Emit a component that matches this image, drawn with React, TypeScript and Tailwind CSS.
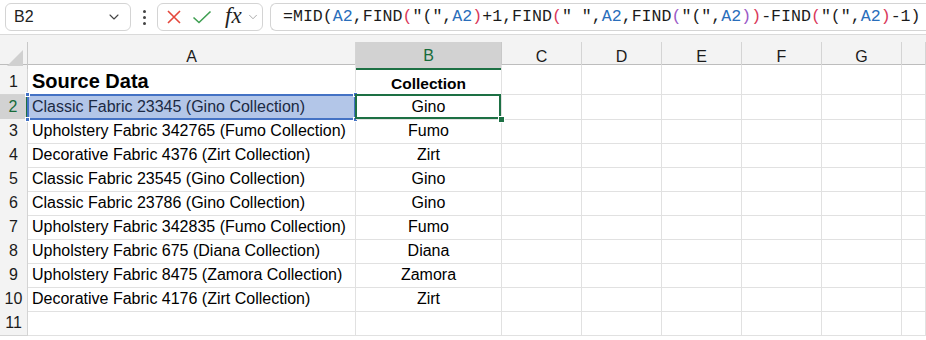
import { ChevronDown } from "lucide-react";

const COLS = ["A", "B", "C", "D", "E", "F", "G", ""];
const GRID = "grid grid-cols-[28px_328px_146px_80px_80px_80px_80px_80px_1fr]";
const CELL_FONT = { fontFamily: '"Liberation Sans Narrow", "Liberation Sans", Arial, sans-serif' };

const rows: [string, string][] = [
  ["Classic Fabric 23345 (Gino Collection)", "Gino"],
  ["Upholstery Fabric 342765 (Fumo Collection)", "Fumo"],
  ["Decorative Fabric 4376 (Zirt Collection)", "Zirt"],
  ["Classic Fabric 23545 (Gino Collection)", "Gino"],
  ["Classic Fabric 23786 (Gino Collection)", "Gino"],
  ["Upholstery Fabric 342835 (Fumo Collection)", "Fumo"],
  ["Upholstery Fabric 675 (Diana Collection)", "Diana"],
  ["Upholstery Fabric 8475 (Zamora Collection)", "Zamora"],
  ["Decorative Fabric 4176 (Zirt Collection)", "Zirt"],
];

// formula pieces coloured like Excel does it: refs blue, parens by depth
const formula: [string, string][] = [
  ["=MID(", "text-[#1b1b1b]"],
  ["A2", "text-[#2a6ebb]"],
  [",FIND", "text-[#1b1b1b]"],
  ["(", "text-[#d9375a]"],
  ['"(",', "text-[#1b1b1b]"],
  ["A2", "text-[#2a6ebb]"],
  [")", "text-[#d9375a]"],
  ["+1,FIND", "text-[#1b1b1b]"],
  ["(", "text-[#d9375a]"],
  ['" ",', "text-[#1b1b1b]"],
  ["A2", "text-[#2a6ebb]"],
  [",FIND", "text-[#1b1b1b]"],
  ["(", "text-[#9b59c6]"],
  ['"(",', "text-[#1b1b1b]"],
  ["A2", "text-[#2a6ebb]"],
  [")", "text-[#9b59c6]"],
  [")", "text-[#d9375a]"],
  ["-FIND", "text-[#1b1b1b]"],
  ["(", "text-[#d9375a]"],
  ['"(",', "text-[#1b1b1b]"],
  ["A2", "text-[#2a6ebb]"],
  [")", "text-[#d9375a]"],
  ["-1)", "text-[#1b1b1b]"],
];

function Handle({ className }: { className: string }) {
  return <span className={`absolute w-[5px] h-[5px] bg-[#4472c4] border border-white ${className}`} />;
}

function FormulaBar() {
  return (
    <div className="flex items-center h-[34px] bg-white pl-[5px] gap-[7px]">
      <div className="flex items-center justify-between w-[126px] h-[28px] border border-[#d4d4d4] rounded-[6px] pl-[8px] pr-[8px]">
        <span className="text-[16px] text-[#222]" style={{ fontFamily: '"Liberation Sans", Arial, sans-serif' }}>
          B2
        </span>
        <ChevronDown size={16} strokeWidth={1.6} className="text-[#444]" />
      </div>
      <div className="flex flex-col gap-[3px] w-[12px] items-center">
        <span className="w-[3px] h-[3px] rounded-full bg-[#444]" />
        <span className="w-[3px] h-[3px] rounded-full bg-[#444]" />
        <span className="w-[3px] h-[3px] rounded-full bg-[#444]" />
      </div>
      <div className="flex items-center w-[106px] h-[28px] border border-[#d4d4d4] rounded-[6px] pl-[8px]">
        <svg width="16" height="16" viewBox="0 0 16 16" className="shrink-0">
          <path d="M2 2 L14 14 M14 2 L2 14" stroke="#e5473b" strokeWidth="1.6" />
        </svg>
        <svg width="20" height="16" viewBox="0 0 20 16" className="ml-[10px] shrink-0">
          <path d="M1.5 8.5 L7 13.5 L18.5 2.5" stroke="#3f9f52" strokeWidth="1.6" fill="none" />
        </svg>
        <span
          className="ml-[13px] text-[23px] italic leading-none text-[#222] -mt-[3px]"
          style={{ fontFamily: '"Liberation Serif", "Times New Roman", serif' }}
        >
          fx
        </span>
        <ChevronDown size={14} strokeWidth={1.4} className="ml-[4px] text-[#999]" />
      </div>
      <div className="flex items-center flex-1 h-[28px] border border-r-0 border-[#d4d4d4] rounded-l-[6px] pl-[12px] overflow-hidden">
        <span
          className="text-[16.6px] whitespace-pre leading-none"
          style={{ fontFamily: '"Liberation Mono", "DejaVu Sans Mono", monospace' }}
        >
          {formula.map(([t, c], i) => (
            <span key={i} className={c}>
              {t}
            </span>
          ))}
        </span>
      </div>
    </div>
  );
}

function ColumnHeaders() {
  return (
    <div className="bg-[#f3f3f3] border-t border-[#dadada] pt-[7px]">
      <div className={`${GRID} h-[23px] border-b border-[#bdbdbd]`}>
        <div className="relative border-r border-[#c8c8c8]">
          <svg width="18" height="18" viewBox="0 0 18 18" className="absolute right-[3px] bottom-[2px]">
            <path d="M17 1 L17 17 L1 17 Z" fill="#d0d0d0" />
          </svg>
        </div>
        {COLS.map((c, i) =>
          c === "B" ? (
            <div
              key={i}
              className="flex items-center justify-center pt-[2px] bg-[#d2d2d2] text-[#176b3a] border-r border-[#c8c8c8] border-b-2 border-b-[#1d7044] -mb-px text-[16px]"
            >
              {c}
            </div>
          ) : (
            <div key={i} className="flex items-center justify-center pt-[2px] border-r border-[#d4d4d4] text-[16px] text-[#1b1b1b]">
              {c}
            </div>
          )
        )}
      </div>
    </div>
  );
}

function Row({ n, a, b, height }: { n: number; a: React.ReactNode; b: React.ReactNode; height: string }) {
  const active = n === 2;
  return (
    <div className={`${GRID} ${height}`}>
      <div
        className={`flex items-end justify-center text-[16px] border-b border-r ${
          active ? "bg-[#d2d2d2] text-[#176b3a] border-r-2 border-r-[#1d7044] border-b-[#c8c8c8]" : "bg-[#f3f3f3] text-[#1b1b1b] border-[#d4d4d4]"
        }`}
      >
        {n}
      </div>
      {a}
      {b}
      {[0, 1, 2, 3, 4, 5].map((k) => (
        <div key={k} className="border-r border-b border-[#e1e1e1]" />
      ))}
    </div>
  );
}

export default function App() {
  return (
    <div className="w-[926px] h-[340px] overflow-hidden bg-white" style={CELL_FONT}>
      <FormulaBar />
      <ColumnHeaders />
      <Row
        n={1}
        height="h-[30px]"
        a={
          <div className="flex items-end pl-[4px] pb-[3px] border-r border-b border-[#e1e1e1] text-[20px] font-bold text-black leading-none">
            Source Data
          </div>
        }
        b={
          <div className="flex items-end justify-center pb-[3px] border-r border-b border-[#e1e1e1] text-[15.5px] font-bold text-black leading-none">
            Collection
          </div>
        }
      />
      {rows.map(([a, b], i) => {
        const n = i + 2;
        const isFirst = n === 2;
        return (
          <Row
            key={n}
            n={n}
            height="h-[24px]"
            a={
              isFirst ? (
                <div className="relative flex items-end pl-[4px] bg-[#b3c6e8] border-r border-b border-[#e1e1e1] text-[16px] text-[#1b2a44]">
                  <span className="absolute -left-px -top-px -right-px -bottom-px border-2 border-[#4472c4]" />
                  <Handle className="-left-[3px] -top-[3px]" />
                  <Handle className="-right-[3px] -top-[3px]" />
                  <Handle className="-left-[3px] -bottom-[3px]" />
                  <Handle className="-right-[3px] -bottom-[3px]" />
                  <span className="relative">{a}</span>
                </div>
              ) : (
                <div className="flex items-end pl-[4px] border-r border-b border-[#e1e1e1] text-[16px] text-black">{a}</div>
              )
            }
            b={
              isFirst ? (
                <div className="relative flex items-end justify-center border-r border-b border-[#e1e1e1] text-[16px] text-black">
                  <span className="absolute -left-px -top-px right-0 bottom-0 border-2 border-[#1d7044]" />
                  <span className="absolute -right-[4px] -bottom-[4px] w-[7px] h-[7px] bg-[#1d7044] border border-white" />
                  {b}
                </div>
              ) : (
                <div className="flex items-end justify-center border-r border-b border-[#e1e1e1] text-[16px] text-black">{b}</div>
              )
            }
          />
        );
      })}
      <Row
        n={11}
        height="h-[24px]"
        a={<div className="border-r border-b border-[#e1e1e1]" />}
        b={<div className="border-r border-b border-[#e1e1e1]" />}
      />
    </div>
  );
}
